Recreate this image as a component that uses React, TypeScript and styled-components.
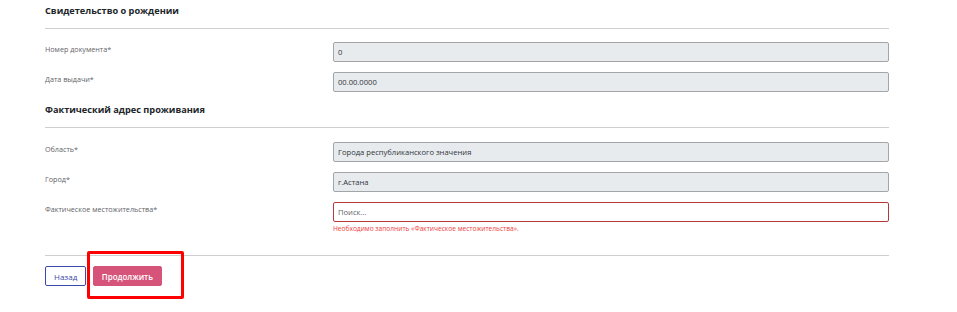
import React from "react";
import styled, { createGlobalStyle } from "styled-components";

const Global = createGlobalStyle`
  html, body { margin: 0; padding: 0; background: #ffffff; }
  body { min-height: 100vh; font-family: "Open Sans", "Noto Sans", sans-serif; color: #212529; }
`;

const Page = styled.div`
  width: 844px;
  padding: 4px 0 30px 45px;
`;

const Section = styled.section`
  display: flex;
  flex-direction: column;
`;

const SectionTitle = styled.h3<{ $top?: number }>`
  margin: ${(p) => p.$top ?? 0}px 0 0 0;
  font-size: 9.2px;
  line-height: 14px;
  font-weight: 700;
  color: #212529;
`;

const Divider = styled.hr<{ $top: number; $bottom: number }>`
  margin: ${(p) => p.$top}px 0 ${(p) => p.$bottom}px 0;
  border: 0;
  border-top: 1px solid #cfcfcf;
  height: 0;
`;

const Rows = styled.div`
  display: flex;
  flex-direction: column;
  gap: 10px;
`;

const Row = styled.div`
  display: grid;
  grid-template-columns: 288px 1fr;
  align-items: start;
`;

const Label = styled.label`
  font-size: 7.2px;
  line-height: 12px;
  color: #5f6368;
  padding-top: 1px;
`;

const Field = styled.div`
  display: flex;
  flex-direction: column;
`;

const Input = styled.div<{ $error?: boolean; $placeholder?: boolean }>`
  box-sizing: border-box;
  height: 20px;
  display: flex;
  align-items: center;
  padding: 0 4px;
  border: 1px solid ${(p) => (p.$error ? "#b5393b" : "#a3a5a8")};
  border-radius: 2px;
  background: ${(p) => (p.$error ? "#ffffff" : "#e8ebee")};
  font-size: 7.6px;
  color: ${(p) => (p.$placeholder ? "#5f6469" : "#30353a")};
`;

const ErrorText = styled.div`
  margin-top: 2px;
  font-size: 6.6px;
  line-height: 10px;
  color: #f03a3a;
`;

const Actions = styled.div`
  display: flex;
  gap: 7px;
  align-items: center;
`;

const Button = styled.button<{ $variant: "outline" | "primary" }>`
  box-sizing: border-box;
  height: 20px;
  padding: 0 ${(p) => (p.$variant === "outline" ? 8 : 7.5)}px;
  border-radius: 2px;
  font-family: "Open Sans", "Noto Sans", sans-serif;
  font-size: 8px;
  font-weight: ${(p) => (p.$variant === "outline" ? 400 : 600)};
  cursor: pointer;
  border: 1px solid ${(p) => (p.$variant === "outline" ? "#3b4aa8" : "#d6537a")};
  background: ${(p) => (p.$variant === "outline" ? "#ffffff" : "#d6537a")};
  color: ${(p) => (p.$variant === "outline" ? "#3b4aa8" : "#ffffff")};
`;

const Highlight = styled.span`
  position: relative;
  display: inline-flex;
  &::after {
    content: "";
    position: absolute;
    left: -6px;
    top: -15px;
    right: -22px;
    bottom: -13px;
    border: 3px solid #ff0000;
    border-radius: 2px;
    pointer-events: none;
  }
`;

type FieldDef = { label: string; value: string; error?: string; placeholder?: boolean };

const FormRow = ({ label, value, error, placeholder }: FieldDef) => (
  <Row>
    <Label>{label}</Label>
    <Field>
      <Input $error={!!error} $placeholder={placeholder}>
        {value}
      </Input>
      {error && <ErrorText>{error}</ErrorText>}
    </Field>
  </Row>
);

export default function App() {
  return (
    <>
      <Global />
      <Page>
        <Section>
          <SectionTitle>Свидетельство о рождении</SectionTitle>
          <Divider $top={10} $bottom={13} />
          <Rows>
            <FormRow label="Номер документа*" value="0" />
            <FormRow label="Дата выдачи*" value="00.00.0000" />
          </Rows>
        </Section>
        <Section>
          <SectionTitle $top={11}>Фактический адрес проживания</SectionTitle>
          <Divider $top={10} $bottom={14} />
          <Rows>
            <FormRow label="Область*" value="Города республиканского значения" />
            <FormRow label="Город*" value="г.Астана" />
            <FormRow
              label="Фактическое местожительства*"
              value="Поиск..."
              placeholder
              error="Необходимо заполнить «Фактическое местожительства»."
            />
          </Rows>
        </Section>
        <Divider $top={21} $bottom={10} />
        <Actions>
          <Button $variant="outline">Назад</Button>
          <Highlight>
            <Button $variant="primary">Продолжить</Button>
          </Highlight>
        </Actions>
      </Page>
    </>
  );
}
